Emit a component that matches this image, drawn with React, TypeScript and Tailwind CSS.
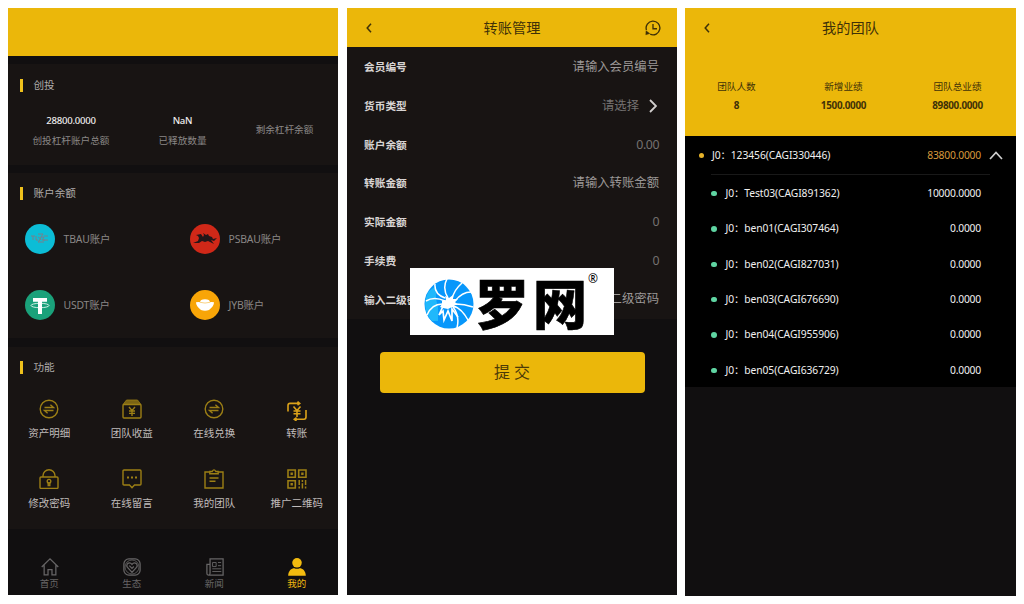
import React from 'react';

type IconProps = { children: React.ReactNode; className?: string; box?: string };

function Icon({ children, className = '', box = '0 0 20 20' }: IconProps) {
  return (
    <svg viewBox={box} fill="none" stroke="currentColor" strokeWidth="1.4" className={`block ${className}`}>
      {children}
    </svg>
  );
}

const exchange = (
  <>
    <circle cx="10" cy="10" r="8.8" />
    <path d="M5.500 8.500h9L11.400 5.800M14.500 11.500h-9l3.100 2.700" />
  </>
);

const income = (
  <>
    <path d="M4.500 1h11L19 5.500H1z" fill="currentColor" fillOpacity=".75" strokeWidth=".8" />
    <rect x="1" y="5.500" width="18" height="13.500" rx="1" />
    <path d="M7 8 10 11.500 13 8M10 11.500V17M7 12h6M7 14.400h6" />
  </>
);

const transfer = (
  <>
    <path d="M1 10.5V4.5Q1 2.4 3 2.4h9.5M10.5.6l2.2 1.8-2.2 1.6M19 9v7q0 2.2-2 2.2H7.5M9.5 20l-2.2-1.8 2.2-1.6" strokeWidth="1.6" />
    <path d="M6.500 5.500 10 9.500l3.500-4M10 9.500V16M6.500 10h7M6.500 12.800h7" strokeWidth="1.6" />
  </>
);

const lock = (
  <>
    <rect x="1" y="8" width="18" height="11.4" rx="1" />
    <path d="M4 8V6.800a6 6 0 0 1 12 0V8M9.200 13.500v3h1.600v-3" />
    <circle cx="10" cy="12.2" r="1.800" />
  </>
);

const message = (
  <>
    <path d="M2 1h16q1 0 1 1v13q0 1-1 1h-5.500L10 18.700 7.500 16H2q-1 0-1-1V2q0-1 1-1z" />
    <path d="M5 8.600h2M9 8.600h2M13 8.600h2" strokeWidth="2" />
  </>
);

const clipboard = (
  <>
    <path d="M5.500 3H1v16h18V3h-4.500" />
    <path d="M5.800 4.700V2.500h2.400Q10-.8 11.800 2.500h2.400v2.200zM5.500 9h9M5.500 12.200h6" />
  </>
);

const qr = (
  <>
    <path d="M1 1h7.3v7.3H1zM11.7 1H19v7.3h-7.3zM1 11.7h7.3V19H1z" strokeWidth="1.6" />
    <path d="M3.500 4.700h2.400M14.200 4.700h2.400M3.500 15.300h2.400" strokeWidth="2.400" />
    <path d="M12.200 11v5M12.200 17.500v2M15.400 11v2M15.400 14.300v5.200M18.600 11v5M18.600 17.500v2" strokeWidth="1.500" />
  </>
);

const home = <path d="M.8 10 10 1l9.200 9M3.500 8v10.800h4.300v-6h4.400v6h4.300V8" />;

const ecology = (
  <>
    <rect x="1" y="1" width="18" height="18" rx="5.500" />
    <circle cx="10" cy="10" r="7.800" strokeWidth=".9" />
    <path d="M10 16 5 10.500C2.400 7.200 7 3.300 10 7.200c3-3.900 7.600 0 5 3.300zM7 8.500l3 3 2-2" />
  </>
);

const news = (
  <>
    <path d="M4.500 1H19v18H3q-2 0-2-2V7h3.500zM4.500 7v10q0 2-1.800 2" />
    <path d="M7.300 5h4v4.500h-4zM13.300 5h3.500M13.300 8.500h3.500M7 12h10M7 15h10" strokeWidth="1" />
  </>
);

const person = (
  <g fill="currentColor" stroke="none">
    <circle cx="10" cy="5.300" r="5.300" />
    <path d="M.2 19.800C.2 14 4 11.300 7 11.300q3 1.200 6 0c3 0 6.800 2.700 6.800 8.500z" />
  </g>
);

function CardTitle({ children }: { children: string }) {
  return (
    <div className="flex h-[14px] items-center pl-[12px]">
      <i className="h-[13px] w-[2.500px] bg-[#efc11c]" />
      <h2 className="ml-[11px] text-[10.600px] leading-[14px] text-[#aeabaa]">{children}</h2>
    </div>
  );
}

function Coin({ name, className, children }: { name: string; className: string; children: React.ReactNode }) {
  return (
    <div className="flex h-[30px] items-center pl-[17px]">
      <span className={`size-[30px] rounded-full ${className}`}>
        <svg viewBox="0 0 30 30" className="block size-full">{children}</svg>
      </span>
      <span className="ml-[8.500px] pt-px text-[10.400px] tracking-[-0.150px] text-[#8a8786]">{name}</span>
    </div>
  );
}

const features = [
  { name: '资产明细', icon: exchange },
  { name: '团队收益', icon: income },
  { name: '在线兑换', icon: exchange },
  { name: '转账', icon: transfer, bright: true },
  { name: '修改密码', icon: lock },
  { name: '在线留言', icon: message },
  { name: '我的团队', icon: clipboard },
  { name: '推广二维码', icon: qr },
];

const tabs = [
  { name: '首页', icon: home },
  { name: '生态', icon: ecology },
  { name: '新闻', icon: news },
  { name: '我的', icon: person, active: true },
];

function AccountScreen() {
  return (
    <section className="flex h-[587px] w-[330px] flex-col bg-[#110f10]">
      <header className="h-12 bg-[#ebb70a]" />
      <div className="mt-2 h-[101px] bg-[#181413] pt-[14px]">
        <CardTitle>创投</CardTitle>
        <div className="grid grid-cols-[126px_97px_107px] pt-[19px] text-center text-[9.650px] leading-[20px] text-[#8a8786]">
          <div>
            <b className="block text-[9.600px] font-medium tracking-[-0.250px] text-[#efeded]">28800.0000</b>
            创投杠杆账户总额
          </div>
          <div>
            <b className="block text-[9.600px] font-medium tracking-[-0.250px] text-[#efeded]">NaN</b>
            已释放数量
          </div>
          <div className="pt-[9px]">剩余杠杆余额</div>
        </div>
      </div>
      <div className="mt-2 h-[165px] bg-[#181413] pt-[13px]">
        <CardTitle>账户余额</CardTitle>
        <div className="grid grid-cols-2 gap-y-9 pt-[24px]">
          <Coin name="TBAU账户" className="bg-[#0cbdd6]">
            <path d="M6 12h4m-2 0v4m3-4v4h2m6-4h4m-5 4h5M13 10h5l-2 3h3l-2 3h3M13 13l3 2-3 3h6M14 17l2-4" fill="none" stroke="#77808c" strokeWidth="1" />
          </Coin>
          <Coin name="PSBAU账户" className="bg-[#d02818]">
            <path d="m6 11 5-1 2 3 1-2-1-2 3 2 2-1 1 2 3 1 1 2 4-1-3 3-3-1 3 4-6-3-3 1-3-1-3 2-6 0 5-2 1-3-1-2z" fill="#251618" />
          </Coin>
          <Coin name="USDT账户" className="bg-[#1aa17a]">
            <path d="M8 8h14v3.700h-5V24h-4V11.700H8z" fill="#fff" />
            <ellipse cx="15" cy="15.500" rx="9" ry="2.200" fill="none" stroke="#fff" strokeWidth=".8" />
          </Coin>
          <Coin name="JYB账户" className="bg-[#f8a507]">
            <path d="M6 12.300q3-.8 4 0 0-3 5-3t5 3q1-.8 4 0 0 4-5 7.700-4 1.500-8 0-5-3.700-5-7.700z" fill="#fff" />
            <path d="M10 12.300q5 1.500 10 0" stroke="#f8c866" strokeWidth=".8" fill="none" />
          </Coin>
        </div>
      </div>
      <div className="mt-[9px] h-[182px] bg-[#181413] pt-[13px]">
        <CardTitle>功能</CardTitle>
        <div className="grid grid-cols-4 gap-y-[23px] pt-[25px]">
          {features.map((f) => (
            <div key={f.name} className="flex h-[47px] flex-col items-center text-[10.500px] text-[#c0bcbb]">
              <Icon className={f.bright ? 'relative top-[2px] size-5 text-[#dba21a]' : 'size-5 text-[#9c7f15]'}>{f.icon}</Icon>
              <span className="mt-[6px] leading-[16px]">{f.name}</span>
            </div>
          ))}
        </div>
      </div>
      <nav className="grid grid-cols-4 pt-[29px]">
        {tabs.map((t) => (
          <div key={t.name} className={`flex flex-col items-center text-[9.500px] leading-[13px] ${t.active ? 'text-[#f3bb0f]' : 'text-[#676566]'}`}>
            <Icon className="ml-px size-[18px]">{t.icon}</Icon>
            <span className="mt-px">{t.name}</span>
          </div>
        ))}
      </nav>
    </section>
  );
}

const fields = [
  { label: '会员编号', value: '请输入会员编号' },
  { label: '货币类型', value: '请选择', dim: true, select: true },
  { label: '账户余额', value: '0.00', dim: true },
  { label: '转账金额', value: '请输入转账金额' },
  { label: '实际金额', value: '0', dim: true },
  { label: '手续费', value: '0', dim: true },
  { label: '输入二级密码', value: '请输入二级密码' },
];

function BackIcon() {
  return (
    <Icon box="0 0 6 10" className="h-[10px] w-[6px]">
      <path d="M5 .8 1.200 5 5 9.200" strokeWidth="1.500" />
    </Icon>
  );
}

function Logo() {
  return (
    <div className="absolute left-[63px] top-[260px] flex h-[67px] w-[204px] items-center bg-white pl-[14px] text-black">
      <svg viewBox="0 0 50 50" className="mt-[5px] size-[50px] shrink-0">
        <circle cx="25" cy="25" r="24.500" fill="#0797fb" />
        <path d="M5 12A24.500 24.500 0 0 0 8 42h6V28l-2-8V7z" fill="#20b8fb" />
        <g fill="none" stroke="#fff" strokeWidth="1.500">
          <path d="M21 19Q10 15 11 5M24 19Q18 9 23 0M28 20Q30 11 38 4M31 22Q38 13 47 13M32 25Q40 25 49 28M30 27Q38 30 44 41M21 22Q10 17 2 22M20 25Q8 24 3 36M29 28Q36 37 33 49" />
        </g>
        <path d="m18 22 4-1-1-4 4 2 4-3 0 4 5 0-3 3 3 3-4 0 2 3-4-1-4 2-5-1-3-1 2-3z" fill="#fff" />
        <path d="m20 25-5 11 4-4 1 9 4-9 4 10 0-12 6 8" fill="none" stroke="#fff" strokeWidth="1.700" />
      </svg>
      <span className="ml-[1px] mt-[5px] whitespace-nowrap text-[54px] font-black leading-[60px] tracking-[4px] [-webkit-text-stroke:0.600px_black]">罗网</span>
      <span className="absolute right-[16px] top-[3px] text-[12px] leading-[16px]">®</span>
    </div>
  );
}

function TransferScreen() {
  return (
    <section className="relative ml-[9px] h-[587px] w-[330px] bg-[#110f10]">
      <header className="grid h-[39px] grid-cols-[1fr_auto_1fr] items-center bg-[#ebb70a] pl-[19px] pr-[16px] text-[#3f3108]">
        <BackIcon />
        <h1 className="pr-[3px] text-[14.200px] leading-5">转账管理</h1>
        <Icon className="size-4 justify-self-end">
          <path d="M1.800 12.500A8.600 8.600 0 1 1 6.500 17.800M10 5v6h5" strokeWidth="1.700" />
          <path d="m1 18.500.3-5 4.700 3.500z" fill="currentColor" strokeWidth=".5" />
        </Icon>
      </header>
      <div className="flex h-[272px] flex-col bg-[#181413] pl-[17px] pr-[18px] pt-px">
        {fields.map((f) => (
          <div key={f.label} className="flex flex-1 items-center justify-between">
            <span className="text-[10.700px] font-bold text-[#d8d4d3]">{f.label}</span>
            <span className={`flex items-center text-[12.350px] ${f.dim ? 'text-[#757271]' : 'text-[#9c9897]'}`}>
              <span className={/^[0-9.]+$/.test(f.value) ? 'tracking-[-0.450px]' : ''}>{f.value}</span>
              {f.select && (
                <Icon box="0 0 8 14" className="ml-[10px] mr-[2px] h-[14px] w-[8px] text-[#d2cfce]">
                  <path d="m1 1 6 6-6 6" strokeWidth="1.800" />
                </Icon>
              )}
            </span>
          </div>
        ))}
      </div>
      <button className="ml-[32.500px] mt-[32.500px] block h-[41.500px] w-[265px] rounded-[4px] bg-[#ebb70a] text-[16px] text-[#4b3a08]">提 交</button>
      <Logo />
    </section>
  );
}

const summary = [
  { label: '团队人数', value: '8' },
  { label: '新增业绩', value: '1500.0000' },
  { label: '团队总业绩', value: '89800.0000' },
];

const members = [
  { name: 'Test03(CAGI891362)', value: '10000.0000' },
  { name: 'ben01(CAGI307464)', value: '0.0000' },
  { name: 'ben02(CAGI827031)', value: '0.0000' },
  { name: 'ben03(CAGI676690)', value: '0.0000' },
  { name: 'ben04(CAGI955906)', value: '0.0000' },
  { name: 'ben05(CAGI636729)', value: '0.0000' },
];

function TeamScreen() {
  return (
    <section className="ml-2 h-[588px] w-[331px] bg-[#110f10]">
      <header className="h-[128px] bg-[#ebb70a] text-[#3f3108]">
        <div className="flex h-[39px] items-center justify-between px-[19px]">
          <BackIcon />
          <h1 className="text-[14.200px] leading-5">我的团队</h1>
          <i className="w-[6px]" />
        </div>
        <div className="grid grid-cols-[103px_111px_117px] pt-[31px] text-center text-[9.650px] leading-[18px]">
          {summary.map((s) => (
            <div key={s.label}>
              {s.label}
              <b className="block text-[9.900px] font-bold tracking-[-0.300px]">{s.value}</b>
            </div>
          ))}
        </div>
      </header>
      <div className="h-[251px] bg-black pt-px text-[10.300px] tracking-[-0.200px] text-[#f0f0f0]">
        <div className="flex h-[37px] items-center pl-[14px] pr-[13px]">
          <i className="size-[5px] rounded-full bg-[#e6b32a]" />
          <span className="ml-[8px] flex-1 whitespace-nowrap pt-px tracking-[-0.070px]">J0：123456(CAGI330446)</span>
          <span className="pt-px text-[#d89a3c]">83800.0000</span>
          <Icon box="0 0 14 9" className="ml-[8px] h-[9px] w-[14px] text-[#cfcfcf]">
            <path d="m1 8 6-6.500L13 8" strokeWidth="1.700" />
          </Icon>
        </div>
        <hr className="mx-[26px] mb-px border-[#191919]" />
        {members.map((m) => (
          <div key={m.name} className="flex h-[35.350px] items-center pl-[26px] pr-[35px]">
            <i className="size-[5.500px] rounded-full bg-[#5fd4a2]" />
            <span className="ml-[9px] flex-1 whitespace-nowrap tracking-[-0.080px]">J0：{m.name}</span>
            <span>{m.value}</span>
          </div>
        ))}
      </div>
    </section>
  );
}

export default function App() {
  return (
    <main className="flex h-[604px] w-[1024px] overflow-hidden bg-white pl-2 pt-2 font-['Noto_Sans','Noto_Sans_CJK_SC',sans-serif]">
      <AccountScreen />
      <TransferScreen />
      <TeamScreen />
    </main>
  );
}
